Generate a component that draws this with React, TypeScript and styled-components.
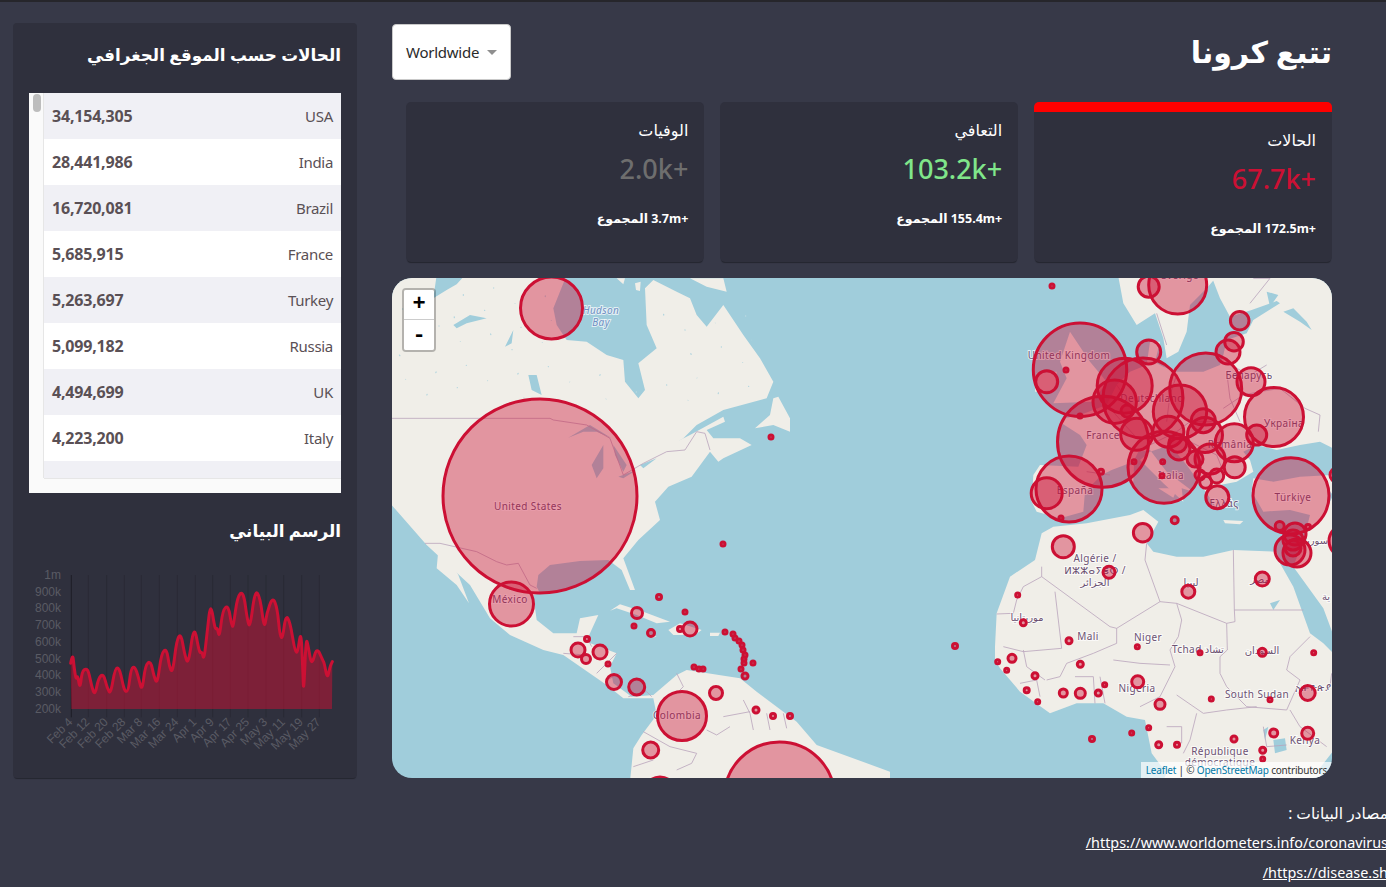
import React from "react";
import styled, { createGlobalStyle } from "styled-components";

const Global = createGlobalStyle`
  html, body { margin: 0; padding: 0; height: 100%; overflow: hidden; background: #373948; }
  body { font-family: "Noto Sans", "DejaVu Sans", sans-serif; }
`;

const Page = styled.div`
  border-top: 2px solid #26262b;
  padding: 21px 54px 0 13px;
  display: flex;
  flex-direction: column;
`;
const Columns = styled.div`
  display: flex;
  gap: 35px;
  align-items: flex-start;
`;
const Sidebar = styled.aside`
  width: 344px;
  height: 755px;
  box-sizing: border-box;
  padding: 16px 16px 8px;
  background: #2f303d;
  border-radius: 4px;
  box-shadow: 0 2px 1px -1px rgba(0, 0, 0, 0.35);
  direction: rtl;
`;
const PanelTitle = styled.h3<{ $top?: number; $bottom?: number }>`
  margin: ${(p) => p.$top ?? 0}px 0 ${(p) => p.$bottom ?? 22}px;
  font-size: 16.8px;
  line-height: 32px;
  font-weight: 700;
  color: #fff;
`;
const TableBox = styled.div`
  height: 400px;
  direction: ltr;
  display: grid;
  grid-template-columns: 15px 1fr;
  grid-template-rows: 1fr 15px;
  background: #fafafa;
  color: #5a5055;
`;
const TrackY = styled.div`
  border-right: 1px solid #e6e6e6;
  padding: 1px 2px 0 4px;
  min-height: 0;
`;
const Thumb = styled.div`
  height: 18px;
  border-radius: 4px;
  background: #bdbdbd;
`;
const RowsClip = styled.div`
  overflow: hidden;
  min-height: 0;
  background: #fff;
`;
const Row = styled.div<{ $odd: boolean }>`
  height: 46px;
  display: flex;
  justify-content: space-between;
  align-items: center;
  padding: 0 8px;
  background: ${(p) => (p.$odd ? "#f0f0f5" : "#fff")};
`;
const Country = styled.span`
  font-size: 15px;
  letter-spacing: -0.3px;
`;
const Count = styled.strong`
  font-size: 16px;
  letter-spacing: -0.2px;
`;
const TrackX = styled.div`
  grid-column: 2;
  border-top: 1px solid #e6e6e6;
`;
const ChartSvg = styled.svg`
  display: block;
  direction: ltr;
  width: 344px;
  height: 210px;
  margin: 13px -16px 0;
`;
const AxisText = styled.text`
  font-family: "Liberation Sans", Arial, sans-serif;
  font-size: 36px;
  fill: #5a5b64;
`;
const GridLine = styled.line<{ $first?: boolean }>`
  stroke: ${(p) => (p.$first ? "#1d1e27" : "#292a35")};
  stroke-width: 3;
`;

const Main = styled.main`
  flex: 1;
  min-width: 0;
  padding-top: 1px;
`;
const Header = styled.header`
  height: 56px;
  display: flex;
  justify-content: space-between;
  align-items: center;
  margin-bottom: 22px;
`;
const Dropdown = styled.div`
  width: 119px;
  height: 56px;
  box-sizing: border-box;
  padding-left: 13px;
  display: flex;
  align-items: center;
  gap: 8px;
  background: #fff;
  border: 1px solid #c9c9c9;
  border-radius: 4px;
  font-size: 15px;
  color: #2a2a2a;
  letter-spacing: -0.25px;
`;
const Caret = styled.span`
  width: 0;
  height: 0;
  border-left: 5px solid transparent;
  border-right: 5px solid transparent;
  border-top: 5px solid #8f8f8f;
`;
const Title = styled.h1`
  margin: 0;
  direction: rtl;
  color: #fff;
  font-size: 30px;
  font-weight: 700;
  line-height: 1;
`;
const Stats = styled.section`
  display: flex;
  flex-direction: row-reverse;
  gap: 15.5px;
  padding-left: 14px;
  margin-bottom: 16px;
`;
const StatCard = styled.article<{ $active?: boolean }>`
  flex: 1;
  height: 160px;
  box-sizing: border-box;
  padding: 16px;
  direction: rtl;
  background: #2f303d;
  border-radius: 5px;
  border-top: ${(p) => (p.$active ? "10px solid #ff0000" : "0 solid transparent")};
  box-shadow: 0 2px 1px -1px rgba(0, 0, 0, 0.35);
  color: #fff;
`;
const StatLabel = styled.div`
  font-size: 16px;
  line-height: 24px;
`;
const StatValue = styled.div<{ $color: string }>`
  margin-top: 7px;
  font-size: 27px;
  font-weight: 500;
  line-height: 40px;
  color: ${(p) => p.$color};
`;
const StatTotal = styled.div`
  margin-top: 20px;
  font-size: 12.5px;
  line-height: 20px;
  font-weight: 700;
`;

const MapFrame = styled.div`
  position: relative;
  height: 500px;
  border-radius: 20px;
  overflow: hidden;
  background: #a0cddb;
`;
const MapSvg = styled.svg`
  display: block;
  width: 940px;
  height: 500px;
`;
const Zoom = styled.div`
  position: absolute;
  top: 10px;
  left: 10px;
  border: 2px solid rgba(0, 0, 0, 0.25);
  border-radius: 4px;
  background-clip: padding-box;
`;
const ZoomButton = styled.div<{ $last?: boolean }>`
  width: 30px;
  height: 30px;
  box-sizing: border-box;
  background: #fff;
  display: flex;
  align-items: center;
  justify-content: center;
  font: 700 22px "Liberation Mono", monospace;
  color: #000;
  border-bottom: ${(p) => (p.$last ? "none" : "1px solid #ccc")};
  border-radius: ${(p) => (p.$last ? "0 0 2px 2px" : "2px 2px 0 0")};
`;
const Attribution = styled.div`
  position: absolute;
  right: 0;
  bottom: 0;
  padding: 0 5px;
  background: rgba(255, 255, 255, 0.7);
  font: 10px/16px "Noto Sans", sans-serif;
  color: #333;
  letter-spacing: -0.2px;
  white-space: nowrap;
`;
const AttrLink = styled.span`
  color: #0078a8;
`;
const Land = styled.path`
  fill: #f0eee8;
`;
const Lake = styled.path`
  fill: #a0cddb;
`;
const Speck = styled.ellipse`
  fill: #b4d6df;
`;
const Border = styled.path`
  fill: none;
  stroke: #b9a3bb;
  stroke-width: 2.4;
`;
const MapLabel = styled.text<{ $sea?: boolean }>`
  font-family: "Noto Sans", "DejaVu Sans", sans-serif;
  font-size: 10px;
  font-style: ${(p) => (p.$sea ? "italic" : "normal")};
  letter-spacing: 0.4px;
  text-anchor: middle;
  fill: ${(p) => (p.$sea ? "#6f8fc4" : "#6c5273")};
  stroke: rgba(255, 255, 255, 0.7);
  stroke-width: 2px;
  paint-order: stroke;
`;
const Bubble = styled.circle`
  fill: rgba(204, 16, 52, 0.4);
  stroke: #cc1034;
  stroke-width: 3;
`;

const Sources = styled.footer`
  direction: rtl;
  margin: 20px -56px 0 0;
  color: #fff;
  line-height: 30px;
  white-space: nowrap;
`;
const SourceHeading = styled.div`
  font-size: 15.5px;
`;
const SourceLink = styled.div`
  font-size: 14.4px;
  text-decoration: underline;
`;

const rows: [string, string][] = [
  ["USA", "34,154,305"],
  ["India", "28,441,986"],
  ["Brazil", "16,720,081"],
  ["France", "5,685,915"],
  ["Turkey", "5,263,697"],
  ["Russia", "5,099,182"],
  ["UK", "4,494,699"],
  ["Italy", "4,223,200"],
];

const linePts: [number, number][] = [
  [212,490],[218,458],[222,500],[228,540],[233,525],[240,568],[246,515],[258,505],[266,515],[275,560],[285,587],[295,535],[310,520],[322,565],[332,583],[345,505],[358,503],[368,550],[375,575],[385,573],[393,505],[405,500],[415,530],[426,577],[436,495],[452,482],[462,530],[472,553],[484,460],[500,445],[508,500],[518,520],[530,420],[543,400],[553,460],[565,498],[582,370],[598,460],[606,455],[612,482],[622,390],[632,305],[645,390],[652,382],[658,415],[668,330],[685,315],[695,378],[700,380],[712,290],[730,272],[742,360],[750,385],[765,270],[780,290],[793,390],[800,340],[818,290],[832,325],[840,410],[848,415],[857,345],[870,365],[885,455],[893,458],[903,388],[908,500],[911,588],[918,412],[925,440],[935,500],[950,440],[968,480],[973,490],[982,538],[990,500],[997,485],
];
const smooth = (pts: [number, number][]) => {
  let d = `M${pts[0][0]},${pts[0][1]}`;
  for (let i = 1; i < pts.length - 1; i++) {
    const mx = (pts[i][0] + pts[i + 1][0]) / 2;
    const my = (pts[i][1] + pts[i + 1][1]) / 2;
    d += ` Q${pts[i][0]},${pts[i][1]} ${mx},${my}`;
  }
  const l = pts[pts.length - 1];
  return d + ` L${l[0]},${l[1]}`;
};
const lineD = smooth(linePts);
const ticks: [number, string][] = [
  [214,"Feb 4"],[265,"Feb 12"],[320,"Feb 20"],[373,"Feb 28"],[424,"Mar 8"],[478,"Mar 16"],[532,"Mar 24"],[586,"Apr 1"],[638,"Apr 9"],[691,"Apr 17"],[744,"Apr 25"],[798,"May 3"],[851,"May 11"],[905,"May 19"],[958,"May 27"],
];
const yLabels = ["1m","900k","800k","700k","600k","500k","400k","300k","200k"];

const bubbles: [number, number, number][] = [
  [540,496,97],[551.5,308,31],[511.5,604,22],[682,716,24.5],[779.5,797,55],[650.7,750,8],[660,793,16],[716,693,6.5],
  [756,710,3],[773,716,2.5],[790,716,2.5],[636.7,687,8],[614,682,7.5],[600,652,7],[578,650,7],[586,659,4.5],[608,664,2],[587,639,2.5],
  [637,613,5.5],[690,629,7],[680,629,2.5],[634,626,2],[659,597,2.5],[685,612,2],[651,633,3.5],[725,632,2],
  [733,634,2],[735,638,2],[739,641,2],[742,645,2],[743,650,2],[745,655,2],[744,659,2],[744,663,2],[741,669,2],[745,676,3],[753,663,2],
  [694,667,2],[699,669,2],[703,669,2],[723,544,2],[771,437,2],[1052,286,2],[955,646,2.5],
  [1080,369.7,46.7],[1046.7,381.7,11],[1066,370,2],[1177.7,285,29],[1148.7,286.7,10.5],[1239.7,320.7,9.3],[1234,341.7,9.3],[1228,352,12],[1148.7,352,12],
  [1143,398,40],[1124.7,385.7,27.5],[1114.7,401.7,21.7],[1127,411,6],[1103,441.7,45.5],[1069,489,33],[1046.7,493.3,15.5],[1101,471.7,2.5],[1061,518,2],[1134,461.7,2],[1162.7,461.7,2],[1174.7,520.3,3.5],[1162,475.7,2],[1080,416,2],
  [1205.7,389,36],[1251,381.7,14],[1274,417,29.5],[1256.7,435,10],[1180,411.7,26.7],[1203.3,420.7,12],[1205,435,17.5],[1168.3,431.7,15.5],[1136.7,434.3,16],[1177.7,443.3,9],[1179,449,11],[1195,459,8],[1210,459,15],[1234.3,442.7,19],[1234.7,467.3,10.5],[1216.7,476,7],[1205.7,482.3,6],[1200,475,5],[1217.3,497.3,11.5],[1164,467.3,36],
  [1291,495.7,38],[1279.7,526,4.5],[1308,527,2.5],[1295,534,11],[1290,550,15],[1297,553,14],[1293,540,10],[1293,548,8],[1345,541,16],[1337,475,7],
  [1063.3,546.7,11],[1142.7,532.7,9.3],[1109,572.3,6],[1188.3,591.7,6.5],[1262.3,579,7],[1307.7,693,7.5],[1307.7,733.3,6],[1137.7,681.7,6],[1160,704.3,5],[1080.3,693.3,5],[1063.3,693,4],[1098.3,693,3],[1104.7,684.7,2],[1080.3,664.3,3],[1069,640.7,3],[1137.3,646.7,2],[1200,652.7,2],[1262.3,652.3,4],[1313.7,652.7,2],[1270,699.7,2],[1211.3,699,2],[1158.7,744.7,3],[1177,744.7,2.5],[1234,739,3],[1273.7,733,4],[1262.7,750.3,3],[1262.7,759,2],[1148.7,727.7,2],[1131.7,733,2],[1092,739,2.5],[1012,658.3,4],[997.7,661.7,2],[1006.7,670.3,2],[1035,675.7,3],[1026.7,690.3,2.5],[1037.7,701.7,2],[1023.3,622.7,3],[1017.7,595,2],
];
const labels: [number, number, string, boolean?][] = [
  [528,510,"United States"],[601,314,"Hudson",true],[601,326,"Bay",true],[510,603,"México"],[677,719,"Colombia"],
  [1069,359,"United Kingdom"],[1103,439,"France"],[1152,402,"Deutschland"],[1249,379,"Беларусь"],[1284,427,"Україна"],[1230,448,"România"],[1171,479,"Italia"],[1075,494,"España"],[1224,507,"Ελλάς"],[1293,501,"Türkiye"],[1180,279,"Sverige"],
  [1095,562,"Algérie /"],[1095,574,"ⵍⵣⵣⴰⵢⴻⵔ /"],[1095,586,"الجزائر"],[1191,586,"ليبيا"],[1260,583,"مصر"],[1027,621,"موريتانيا"],[1088,640,"Mali"],[1148,641,"Niger"],[1198,653,"Tchad تشاد"],[1262,654,"السودان"],[1137,692,"Nigeria"],[1257,698,"South Sudan"],[1313,691,"ኢትዮጵያ"],[1305,744,"Kenya"],[1220,755,"République"],[1220,766,"démocratique"],[1316,544,"سوريا"],[1326,600,"ية"],
];
const specks = Array.from({ length: 60 }, (_, i) => ({
  x: 20 + ((i * 173) % 1120),
  y: 30 + ((i * 97) % 350),
  rx: 2 + ((i * 7) % 7),
  ry: 1 + ((i * 5) % 3),
  a: -40 + ((i * 31) % 80),
})).filter((s) => !(s.x > 520 && s.x < 820 && s.y < 290) && !(s.x > 900 && s.y < 120));

const Chart = () => (
  <ChartSvg viewBox="39 180 1032 630">
    {ticks.map(([x], i) => (
      <GridLine key={x} $first={i === 0} x1={x} x2={x} y1={225} y2={652} />
    ))}
    {yLabels.map((t, i) => (
      <AxisText key={t} x={183} y={237 + i * 50.2} textAnchor="end">{t}</AxisText>
    ))}
    {ticks.map(([x, t]) => (
      <AxisText key={t} textAnchor="end" transform={`translate(${x + 6} 668) rotate(-45)`}>{t}</AxisText>
    ))}
    <path d={`${lineD} L996,627 L214,627 Z`} fill="rgba(204,16,52,0.5)" />
    <path d={lineD} fill="none" stroke="#cc1034" strokeWidth={9} strokeLinejoin="round" strokeLinecap="round" />
  </ChartSvg>
);

const WorldMap = () => (
  <MapSvg viewBox="392 278 940 500">
    <g transform="translate(390 275) scale(0.33333)">
      <Land d="M0,0 L140,0 L130,70 L170,45 L200,28 L225,0 L530,0 L490,100 L500,150 L530,195 L590,200 L650,240 L700,255 L705,320 L745,370 L765,345 L745,265 L800,220 L770,150 L765,40 L790,15 L860,50 L900,70 L920,120 L950,155 L1000,90 L1060,180 L1110,250 L1150,320 L1130,370 L1000,405 L920,450 L880,490 L860,500 L900,480 L1000,425 L1005,440 L950,465 L970,490 L1050,490 L1085,510 L1000,550 L985,560 L960,530 L905,605 L835,635 L795,680 L810,735 L745,795 L700,850 L735,945 L720,945 L695,885 L655,855 L570,858 L480,870 L445,900 L440,935 L450,955 L430,960 L440,1035 L490,1075 L560,1075 L570,1030 L625,1020 L600,1075 L590,1100 L680,1135 L660,1175 L670,1225 L725,1265 L790,1260 L860,1200 L890,1185 L1050,1210 L1100,1250 L1220,1340 L1280,1410 L1500,1490 L1500,1520 L720,1520 L730,1420 L755,1380 L800,1320 L790,1270 L700,1270 L650,1230 L520,1140 L460,1125 L360,1080 L300,1030 L240,930 L110,810 L5,690 L0,690 Z" />
      <Land d="M145,825 L160,820 L205,900 L237,985 L200,930 L140,880 Z" />
      <Land d="M680,10 L705,10 L700,28 Z M735,25 L752,20 L750,48 L738,45 Z M900,10 L1000,10 L1010,50 L950,35 Z" />
      <Land d="M1095,460 L1140,420 L1150,370 L1165,365 L1200,430 L1200,470 L1150,450 Z" />
      <Land d="M660,1007 L690,988 L760,1010 L840,1040 L800,1045 L740,1020 L680,1000 Z M835,1065 L870,1045 L935,1065 L915,1080 L850,1080 Z M960,1073 L990,1073 L985,1083 L960,1083 Z M770,1075 L800,1085 L785,1088 Z" />
      {specks.map((s, i) => (
        <Speck key={i} cx={s.x} cy={s.y} rx={s.rx} ry={s.ry} transform={`rotate(${s.a} ${s.x} ${s.y})`} />
      ))}
      <Lake d="M190,150 L240,120 L290,130 L230,145 L200,160 Z M345,215 L370,165 L365,205 Z M415,300 L440,300 L455,360 L425,345 Z M535,488 L600,450 L665,490 L620,470 L580,470 Z M605,570 L640,510 L640,580 L620,610 Z M670,510 L710,570 L700,590 L675,540 Z M685,605 L740,585 L700,610 Z M750,570 L800,550 L760,580 Z" />
      <Border d="M5,430 L480,430 L490,435 L590,450 L660,490 L700,600 L760,565 L830,530 L885,525 L920,470 L945,475 L960,525" />
      <Border d="M105,805 L150,805 L260,830 L320,860 L350,870 L385,865 L420,930 L440,940" />
    </g>
    <g transform="translate(390 540) scale(0.33333)">
      <Border d="M550,290 L590,290 L605,320 M520,340 L585,345 M620,400 L680,340 M650,420 L690,400 M715,470 L770,455 L785,470 M860,400 L880,440 L860,460 M1060,480 L1080,520 L1090,570 M1000,530 L1080,515 M950,570 L980,585 L1020,560 M760,575 L840,620 L920,640 L905,670 L860,690 M730,680 L790,660 M1130,520 L1140,570 M1180,520 L1190,565" />
    </g>
    <g transform="translate(990 275) scale(0.33333)">
      <Land d="M385,5 L400,85 L440,150 L495,115 L520,190 L530,250 L565,230 L590,170 L600,90 L650,40 L680,5 Z" />
      <Land d="M665,5 L690,70 L720,125 L785,105 L860,78 L870,85 L790,135 L770,175 L710,195 L700,240 L690,270 L640,290 L560,290 L520,275 L495,262 L510,200 L480,200 L470,270 L420,290 L380,330 L350,390 L270,420 L225,430 L215,445 L270,480 L290,510 L265,575 L150,570 L130,600 L125,680 L140,710 L210,730 L280,710 L285,650 L335,600 L365,585 L430,560 L445,530 L480,525 L530,590 L610,650 L575,640 L580,680 L520,625 L450,555 L480,530 L540,510 L590,570 L640,640 L680,700 L730,680 L690,630 L740,620 L790,590 L780,555 L760,530 L800,510 L860,525 L930,510 L990,500 L1030,520 L1030,5 Z" />
      <Land d="M240,170 L300,260 L350,320 L310,380 L190,385 L230,310 L210,260 Z M140,295 L200,290 L195,345 L135,350 Z" />
      <Land d="M415,570 L432,570 L430,620 L415,620 Z M420,530 L435,530 L432,560 L420,558 Z M505,640 L562,640 L550,668 Z M700,735 L760,738 L750,748 L705,745 Z" />
      <Land d="M790,610 L850,620 L930,605 L1030,600 L1030,720 L960,720 L900,705 L820,710 L785,650 Z" />
      <Land d="M960,720 L1030,720 L1030,1080 L1000,1000 L910,875 L945,780 Z" />
      <Lake d="M880,110 L910,100 L950,140 L965,165 L930,140 Z M830,50 L865,60 L840,95 Z M1010,640 L1030,660 L1020,680 Z" />
      <Border d="M500,115 L530,210 M790,10 L840,10 L780,85 M720,270 L780,300 L830,270 M700,400 L760,360 L810,350 L870,340 L945,400 L990,420 L985,470 M560,300 L540,360 L530,440 M710,290 L720,370 L750,440 M380,330 L450,430 M360,400 L450,500 M480,510 L560,470 L600,440 L680,440 M290,590 L360,600 M600,500 L680,540 L700,590" />
    </g>
    <g transform="translate(990 540) scale(0.33333)">
      <Land d="M135,60 L155,-20 L190,-40 L290,-50 L420,-75 L460,-90 L505,-55 L470,10 L490,35 L560,50 L640,50 L730,30 L860,35 L870,70 L910,140 L960,280 L1000,310 L1040,350 L1040,620 L985,690 L1000,720 L520,720 L530,700 L485,640 L465,540 L410,530 L340,490 L260,490 L180,520 L90,455 L30,385 L15,360 L15,320 L20,220 L60,110 Z" />
      <Lake d="M850,600 L885,595 L890,630 L855,640 Z M820,570 L835,560 L825,600 Z M840,190 L870,180 L850,210 Z" />
      <Border d="M155,110 L360,260 L380,265 L510,185 L560,190 L710,250 L735,245 L733,210 L940,210 M733,210 L730,30 M470,10 L465,60 L510,185 M155,80 L155,110 L100,140 L80,180 L70,220 L20,222 M195,155 L215,325 L100,335 L40,320 M380,265 L380,310 L310,340 L230,370 L210,410 L170,420 M560,190 L575,240 L565,290 L540,330 L555,380 L510,470 L450,500 M710,250 L712,330 L690,350 L690,400 L710,440 L770,500 L890,510 L930,420 L890,390 L900,350 L960,290 M370,360 L450,370 L540,375 M255,410 L310,410 L315,490 M345,490 L330,410 M560,465 L640,520 L710,510 L800,500 M620,520 L600,600 L580,640 M530,560 L575,560 L575,610 M900,510 L930,560 L1010,620 M820,560 L830,620 L890,615 M1025,400 L1020,440 M90,430 L140,420 L150,470 M100,330 L110,380 L165,420" />
    </g>
    {labels.map(([x, y, t, sea]) => (
      <MapLabel key={t} x={x} y={y} $sea={sea}>{t}</MapLabel>
    ))}
    {bubbles.map(([x, y, r], i) => (
      <Bubble key={i} cx={x} cy={y} r={r} />
    ))}
  </MapSvg>
);

export default function App() {
  return (
    <Page>
      <Global />
      <Columns>
        <Sidebar>
          <PanelTitle>الحالات حسب الموقع الجغرافي</PanelTitle>
          <TableBox>
            <TrackY><Thumb /></TrackY>
            <RowsClip>
              {rows.map(([c, n], i) => (
                <Row key={c} $odd={i % 2 === 0}>
                  <Count>{n}</Count>
                  <Country>{c}</Country>
                </Row>
              ))}
              <Row $odd />
            </RowsClip>
            <TrackX />
          </TableBox>
          <PanelTitle $top={22} $bottom={0}>الرسم البياني</PanelTitle>
          <Chart />
        </Sidebar>
        <Main>
          <Header>
            <Dropdown>Worldwide<Caret /></Dropdown>
            <Title>تتبع كرونا</Title>
          </Header>
          <Stats>
            <StatCard $active>
              <StatLabel>الحالات</StatLabel>
              <StatValue $color="#cc1034">+67.7k</StatValue>
              <StatTotal>+172.5m المجموع</StatTotal>
            </StatCard>
            <StatCard>
              <StatLabel>التعافي</StatLabel>
              <StatValue $color="#80e68a">+103.2k</StatValue>
              <StatTotal>+155.4m المجموع</StatTotal>
            </StatCard>
            <StatCard>
              <StatLabel>الوفيات</StatLabel>
              <StatValue $color="#6e6e6e">+2.0k</StatValue>
              <StatTotal>+3.7m المجموع</StatTotal>
            </StatCard>
          </Stats>
          <MapFrame>
            <WorldMap />
            <Zoom>
              <ZoomButton>+</ZoomButton>
              <ZoomButton $last>-</ZoomButton>
            </Zoom>
            <Attribution>
              <AttrLink>Leaflet</AttrLink> | © <AttrLink>OpenStreetMap</AttrLink> contributors
            </Attribution>
          </MapFrame>
        </Main>
      </Columns>
      <Sources>
        <SourceHeading>مصادر البيانات :</SourceHeading>
        <SourceLink>https://www.worldometers.info/coronavirus/</SourceLink>
        <SourceLink>https://disease.sh/</SourceLink>
      </Sources>
    </Page>
  );
}
